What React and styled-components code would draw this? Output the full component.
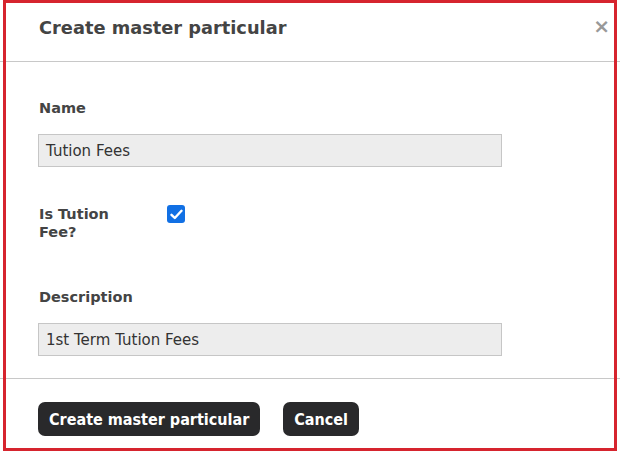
import React from "react";
import styled, { createGlobalStyle } from "styled-components";

const Global = createGlobalStyle`
  html, body { margin: 0; padding: 0; background: #fff; }
  body { font-family: "DejaVu Sans", Verdana, sans-serif; }
  * { box-sizing: border-box; }
`;

const Modal = styled.div`
  position: relative;
  width: 620px;
  height: 453px;
  background: #fff;
  display: flex;
  flex-direction: column;
`;

const Highlight = styled.div`
  position: absolute;
  left: 3px;
  top: 0;
  width: 614px;
  height: 451px;
  border: 3px solid #d6242e;
  pointer-events: none;
`;

const Header = styled.div`
  height: 62px;
  border-bottom: 1px solid #c8c8c8;
  display: flex;
  align-items: flex-start;
  justify-content: space-between;
  padding: 16px 10px 0 39px;
`;

const Title = styled.h2`
  margin: 0;
  font-size: 17.8px;
  line-height: 24px;
  font-weight: bold;
  color: #444;
`;

const Close = styled.button`
  border: none;
  background: none;
  padding: 0;
  margin-top: -2px;
  font-family: "DejaVu Sans", sans-serif;
  font-size: 20px;
  line-height: 24px;
  font-weight: bold;
  color: #999;
  cursor: pointer;
`;

const Body = styled.div`
  flex: 1;
  padding: 37px 39px 0 38px;
  display: flex;
  flex-direction: column;
`;

const Label = styled.div`
  font-size: 14.5px;
  line-height: 18px;
  font-weight: bold;
  color: #444;
  padding-left: 1px;
  width: ${(p) => p.$width || "auto"};
`;

const Field = styled.div`
  display: flex;
  flex-direction: column;
  gap: ${(p) => p.$gap || "17px"};
  margin-top: ${(p) => p.$mt || "0"};
`;

const Input = styled.div`
  width: 464px;
  height: 33px;
  background: #ededed;
  border: 1px solid #c6c6c6;
  padding: 0 7px;
  display: flex;
  align-items: center;
  font-size: 15px;
  color: #333;
`;

const CheckRow = styled.div`
  display: flex;
  align-items: flex-start;
  gap: 29px;
  margin-top: ${(p) => p.$mt};
`;

const CheckBox = styled.span`
  width: 18px;
  height: 18px;
  border-radius: 3px;
  background: #1170e4;
  display: flex;
  align-items: center;
  justify-content: center;
`;

const Footer = styled.div`
  height: 75px;
  border-top: 1px solid #c8c8c8;
  display: flex;
  align-items: flex-start;
  gap: 23px;
  padding: 23px 0 0 38px;
`;

const Button = styled.button`
  height: 34px;
  border: none;
  border-radius: 7px;
  background: #29292b;
  color: #fff;
  font-family: "DejaVu Sans Condensed", "DejaVu Sans", sans-serif;
  font-weight: bold;
  font-size: 16px;
  padding: 0 ${(p) => p.$px || "11px"};
  cursor: pointer;
`;

export default function App() {
  return (
    <>
      <Global />
      <Modal>
        <Header>
          <Title>Create master particular</Title>
          <Close aria-label="Close">×</Close>
        </Header>
        <Body>
          <Field>
            <Label>Name</Label>
            <Input>Tution Fees</Input>
          </Field>
          <CheckRow $mt="38px">
            <Label $width="100px">Is Tution Fee?</Label>
            <CheckBox>
              <svg width="13" height="11" viewBox="0 0 13 11">
                <path d="M1.5 5.8 L4.8 9 L11.5 1.8" fill="none" stroke="#fff" strokeWidth="2.4" strokeLinecap="round" strokeLinejoin="round" />
              </svg>
            </CheckBox>
          </CheckRow>
          <Field $mt="47px">
            <Label>Description</Label>
            <Input>1st Term Tution Fees</Input>
          </Field>
        </Body>
        <Footer>
          <Button>Create master particular</Button>
          <Button $px="11px">Cancel</Button>
        </Footer>
        <Highlight />
      </Modal>
    </>
  );
}
